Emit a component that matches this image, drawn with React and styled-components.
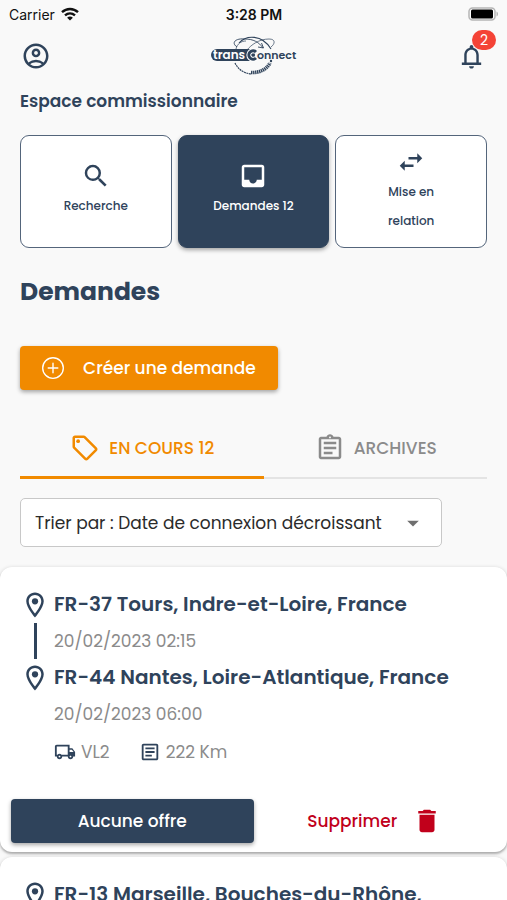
import React from "react";
import styled, { createGlobalStyle } from "styled-components";
import {
    MdArrowDropDown,
    MdDelete,
    MdInbox,
    MdOutlineAccountCircle,
    MdOutlineArticle,
    MdOutlineAssignment,
    MdOutlineLocalOffer,
    MdOutlineLocalShipping,
    MdSearch,
    MdSwapHoriz,
} from "react-icons/md";
import { BsPlusCircle } from "react-icons/bs";

const navy = "#2f435b";
const orange = "#f18a00";
const grey = "#8b8b8b";

const GlobalStyle = createGlobalStyle`
    * {
        box-sizing: border-box;
    }
    body {
        margin: 0;
        background: #f9f9f9;
        color: ${navy};
        font-family: Poppins, Inter, "Liberation Sans", sans-serif;
    }
    button, select {
        font-family: inherit;
    }
`;

const Page = styled.div`
    height: 100vh;
    overflow-x: hidden;
    overflow-y: auto;
    scrollbar-width: none;
`;

const StatusBar = styled.div`
    display: grid;
    grid-template-columns: 1fr auto 1fr;
    align-items: center;
    height: 28px;
    padding: 0 8px 0 9px;
    color: #111;
    font-family: Inter, "Liberation Sans", sans-serif;
    font-size: 14px;
`;

const Carrier = styled.div`
    display: flex;
    align-items: center;
    gap: 6px;
`;

const Clock = styled.div`
    font-weight: 600;
`;

const Battery = styled.svg`
    justify-self: end;
`;

const Header = styled.header`
    display: grid;
    grid-template-columns: 1fr auto 1fr;
    align-items: center;
    height: 56px;
    padding: 0 21px;
`;

const IconButton = styled.button`
    position: relative;
    display: flex;
    justify-self: ${({ $end }) => ($end ? "end" : "start")};
    padding: 0;
    border: none;
    background: none;
    color: ${navy};
    cursor: pointer;
`;

const Badge = styled.span`
    position: absolute;
    top: -12px;
    right: -10px;
    min-width: 24px;
    border-radius: 10px;
    background: #f44336;
    color: #fff;
    font-size: 14px;
    line-height: 20px;
    text-align: center;
`;

const Content = styled.main`
    padding: 0 20px;
`;

const Space = styled.p`
    margin: 4px 0 20px;
    font-size: 17px;
    font-weight: 600;
    line-height: 27px;
`;

const Menu = styled.nav`
    display: grid;
    grid-template-columns: repeat(3, 1fr);
    gap: 6px;
`;

const MenuButton = styled.button`
    display: flex;
    flex-direction: column;
    align-items: center;
    justify-content: center;
    height: 113px;
    padding: 0 32px 2px;
    border: 1px solid ${({ $active }) => ($active ? navy : "#54657b")};
    border-radius: 9px;
    background: ${({ $active }) => ($active ? navy : "#fff")};
    box-shadow: ${({ $active }) => ($active ? "0 2px 4px rgba(0, 0, 0, 0.35)" : "none")};
    color: ${({ $active }) => ($active ? "#fff" : navy)};
    font-size: 12px;
    font-weight: 500;
    line-height: 29px;
    cursor: pointer;
`;

const Title = styled.h1`
    margin: 25px 0 36px;
    font-size: 25px;
    font-weight: 700;
    line-height: 37px;
`;

const Button = styled.button`
    display: flex;
    align-items: center;
    justify-content: center;
    gap: ${({ $gap }) => $gap || 0}px;
    height: 44px;
    padding: 0 22px;
    border: none;
    border-radius: 4px;
    background: ${({ $color }) => $color || "transparent"};
    box-shadow: ${({ $color }) => ($color ? "0 2px 4px rgba(0, 0, 0, 0.35)" : "none")};
    color: ${({ $color }) => ($color ? "#fff" : "#c1001b")};
    font-size: 17px;
    font-weight: 500;
    cursor: pointer;
`;

const Tabs = styled.div`
    display: flex;
    margin: 29px 0 19px;
    box-shadow: inset 0 -2px #e4e4e4;
`;

const Tab = styled.button`
    display: flex;
    align-items: center;
    justify-content: center;
    gap: 9px;
    flex: ${({ $active }) => ($active ? 245 : 223)};
    height: 60px;
    padding: 0;
    border: none;
    border-bottom: 3px solid ${({ $active }) => ($active ? orange : "transparent")};
    background: none;
    color: ${({ $active }) => ($active ? orange : grey)};
    font-size: 17px;
    font-weight: 500;
    cursor: pointer;
`;

const SortBox = styled.div`
    display: grid;
    align-items: center;
    width: 422px;
    max-width: 100%;

    > * {
        grid-area: 1 / 1;
    }
    svg {
        justify-self: end;
        margin-right: 15px;
        color: #6f6f6f;
        pointer-events: none;
    }
`;

const SortSelect = styled.select`
    appearance: none;
    width: 100%;
    height: 49px;
    padding: 0 44px 0 14px;
    border: 1px solid #c8c8c8;
    border-radius: 5px;
    background: #fff;
    color: #2b2b2b;
    font-size: 17px;
`;

const List = styled.section`
    display: flex;
    flex-direction: column;
    gap: 5px;
    margin-top: 20px;
`;

const Card = styled.article`
    padding: 19px 11px 9px;
    border-radius: 12px;
    background: #fff;
    box-shadow: 0 1px 4px rgba(0, 0, 0, 0.2), 0 2px 2px rgba(0, 0, 0, 0.2);
`;

const Stop = styled.div`
    display: grid;
    grid-template-columns: 30px 1fr;
    column-gap: 4px;
    align-items: start;
    padding: 0 30px 0 9px;
`;

const City = styled.h2`
    margin: 0;
    font-size: 20px;
    font-weight: 600;
    line-height: 37px;
`;

const Pin = styled.svg`
    margin-top: 4px;
`;

const Link = styled.span`
    justify-self: center;
    width: 3px;
    height: 36px;
    background: ${({ $visible }) => ($visible ? navy : "transparent")};
`;

const StopDate = styled.span`
    color: ${grey};
    font-size: 17px;
    line-height: 36px;
`;

const Meta = styled.div`
    display: flex;
    gap: 29px;
    padding-left: 43px;
    color: ${grey};
    font-size: 17px;
    line-height: 40px;
`;

const MetaItem = styled.span`
    display: flex;
    align-items: center;
    gap: 5px;

    svg {
        color: ${navy};
    }
`;

const Actions = styled.div`
    display: grid;
    grid-template-columns: 1fr 1fr;
    margin-top: 27px;
`;

const Wifi = () => (
    <svg width="18" height="14" viewBox="0 0 18 14" fill="none" stroke="#111" strokeWidth="2.4">
        <path d="M1 5.2C5.6.9 12.4.9 17 5.2" />
        <path d="M4 8.4c3-2.7 7-2.7 10 0" />
        <path d="M9 13.6 6.1 10.7c1.7-1.5 4.1-1.5 5.8 0z" fill="#111" stroke="none" />
    </svg>
);

const Bell = () => (
    <svg width="29" height="29" viewBox="0 0 24 24" fill="currentColor">
        <path d="M18 17v-6c0-3.07-1.63-5.64-4.5-6.32V4a1.5 1.5 0 0 0-3 0v.68C7.64 5.36 6 7.92 6 11v6H4v2h16v-2zm-2 0H8v-6c0-2.48 1.51-4.5 4-4.5s4 2.02 4 4.5zM10 20h4c0 1.1-.9 2-2 2s-2-.9-2-2z" />
    </svg>
);

const Place = () => (
    <Pin width="30" height="30" viewBox="0 0 24 24" fill="currentColor">
        <path d="M12 2C8.13 2 5 5.13 5 9c0 5.25 7 13 7 13s7-7.75 7-13c0-3.87-3.13-7-7-7zM7 9c0-2.76 2.24-5 5-5s5 2.24 5 5c0 2.88-2.88 7.19-5 9.88C9.92 16.21 7 11.85 7 9z" />
        <circle cx="12" cy="9" r="2.5" />
    </Pin>
);

const Logo = () => (
    <svg width="86" height="42" viewBox="0 0 86 42" role="img" aria-label="trans connect">
        <g fill="none" stroke={navy}>
            <path d="M28 8C35 0 51-1 60 14" strokeWidth="1.1" />
            <path d="M24 28c3 6 8 10 16 11" strokeWidth="1.2" strokeDasharray="2 .6" />
            <path d="M40 37.5C49 38 56 34 59 28" strokeWidth="3.6" strokeDasharray="1.4 .6" />
            <path d="M26 12c-6-4-2-9 8-8 8 0 14 3 18 9m-5-1 5.5 1-2-5" strokeWidth=".9" />
            <path d="M25 14c1-5 5-8 10-8M36 15c4-5 12-11 22-11 7 0 6 5 2 8" strokeWidth=".7" />
        </g>
        <circle cx="60" cy="26" r="1.2" fill={navy} />
        <rect x="0" y="14" width="44" height="12" rx="6" fill={navy} />
        <text x="2" y="24" fill="#fff" fontSize="12" fontWeight="600">
            trans
        </text>
        <path d="M45 17a4.2 4.2 0 1 0 0 6" fill="none" stroke="#fff" strokeWidth="5" />
        <path d="M45 17a4.2 4.2 0 1 0 0 6" fill="none" stroke={navy} strokeWidth="3" />
        <text x="46" y="24" fill={navy} fontSize="11" fontWeight="600">
            onnect
        </text>
    </svg>
);

const requests = [
    {
        stops: [
            { city: "FR-37 Tours, Indre-et-Loire, France", date: "20/02/2023 02:15" },
            { city: "FR-44 Nantes, Loire-Atlantique, France", date: "20/02/2023 06:00" },
        ],
        vehicle: "VL2",
        distance: "222 Km",
    },
    {
        stops: [{ city: "FR-13 Marseille, Bouches-du-Rhône," }],
    },
];

const RequestCard = ({ stops, vehicle, distance }) => (
    <Card>
        {stops.map(({ city, date }, i) => (
            <Stop key={city}>
                <Place />
                <City>{city}</City>
                {date && (
                    <>
                        <Link $visible={i < stops.length - 1} />
                        <StopDate>{date}</StopDate>
                    </>
                )}
            </Stop>
        ))}
        {vehicle && (
            <Meta>
                <MetaItem>
                    <MdOutlineLocalShipping size={22} />
                    {vehicle}
                </MetaItem>
                <MetaItem>
                    <MdOutlineArticle size={22} />
                    {distance}
                </MetaItem>
            </Meta>
        )}
        {vehicle && (
            <Actions>
                <Button $color={navy}>Aucune offre</Button>
                <Button $gap={15}>
                    Supprimer
                    <MdDelete size={30} />
                </Button>
            </Actions>
        )}
    </Card>
);

const App = () => {
    return (
        <Page>
            <GlobalStyle />
            <StatusBar>
                <Carrier>
                    Carrier
                    <Wifi />
                </Carrier>
                <Clock>3:28 PM</Clock>
                <Battery width="31" height="14" viewBox="0 0 31 14">
                    <rect x="1" y="1" width="26" height="12" rx="3.5" fill="#fff" stroke="#b5b5b5" strokeWidth="1.5" />
                    <rect x="3" y="2.500" width="22" height="9" rx="1.5" fill="#000" />
                    <path d="M28.5 4.5c2 .8 2 4.2 0 5z" fill="#b5b5b5" />
                </Battery>
            </StatusBar>
            <Header>
                <IconButton aria-label="Mon compte">
                    <MdOutlineAccountCircle size={30} />
                </IconButton>
                <Logo />
                <IconButton aria-label="Notifications" $end>
                    <Bell />
                    <Badge>2</Badge>
                </IconButton>
            </Header>
            <Content>
                <Space>Espace commissionnaire</Space>
                <Menu>
                    <MenuButton>
                        <MdSearch size={30} />
                        Recherche
                    </MenuButton>
                    <MenuButton $active>
                        <MdInbox size={30} />
                        Demandes 12
                    </MenuButton>
                    <MenuButton>
                        <MdSwapHoriz size={30} />
                        Mise en relation
                    </MenuButton>
                </Menu>
                <Title>Demandes</Title>
                <Button $color={orange} $gap={19}>
                    <BsPlusCircle size={22} />
                    Créer une demande
                </Button>
                <Tabs role="tablist">
                    <Tab role="tab" aria-selected="true" $active>
                        <MdOutlineLocalOffer size={30} />
                        EN COURS 12
                    </Tab>
                    <Tab role="tab" aria-selected="false">
                        <MdOutlineAssignment size={30} />
                        ARCHIVES
                    </Tab>
                </Tabs>
                <SortBox>
                    <SortSelect aria-label="Trier par">
                        <option>Trier par : Date de connexion décroissant</option>
                    </SortSelect>
                    <MdArrowDropDown size={28} />
                </SortBox>
            </Content>
            <List>
                {requests.map((request) => (
                    <RequestCard key={request.stops[0].city} {...request} />
                ))}
            </List>
        </Page>
    );
};

export default App;
